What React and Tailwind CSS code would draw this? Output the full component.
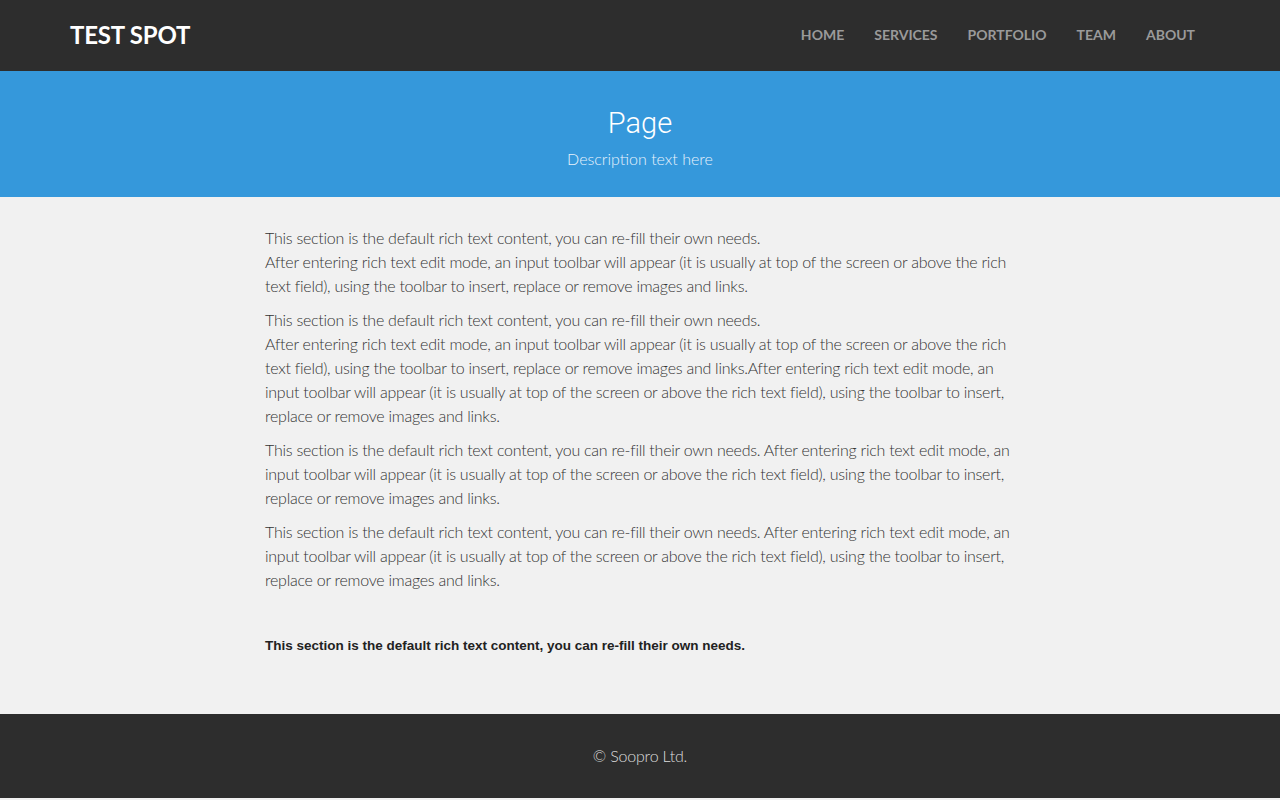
export default function App() {
  const p1 = "This section is the default rich text content, you can re-fill their own needs.";
  const p2 = "After entering rich text edit mode, an input toolbar will appear (it is usually at top of the screen or above the rich text field), using the toolbar to insert, replace or remove images and links.";
  return (
    <div className="bg-[#f1f1f1]" style={{ fontFamily: "Lato, 'Liberation Sans', sans-serif" }}>
      <header className="h-[71px] bg-[#2d2d2d] flex items-center justify-between pl-[70px] pr-[70px] pb-[2px]">
        <div className="text-white text-[24px] font-bold tracking-[-0.2px] leading-none">TEST SPOT</div>
        <nav className="flex items-center gap-[30px] text-[14px] font-bold text-[#9a9a9a] -mt-[1px]">
          <span>HOME</span>
          <span>SERVICES</span>
          <span>PORTFOLIO</span>
          <span>TEAM</span>
          <span className="mr-[15px]">ABOUT</span>
        </nav>
      </header>
      <section className="h-[126px] bg-[#3598db] flex flex-col items-center pt-[34px]">
        <h1 className="text-white text-[29px] leading-[36px]" style={{ fontFamily: "Roboto, 'Open Sans', sans-serif", fontWeight: 300 }}>Page</h1>
        <p className="text-[#e8f2fb] text-[16px] font-light leading-[22px] mt-[7px]">Description text here</p>
      </section>
      <main className="w-[750px] mx-auto pt-[29px] pb-[58px] text-[16px] leading-[24px] font-light tracking-[-0.25px] text-[#333333]">
        <p className="mb-[10px]">{p1}<br />{p2}</p>
        <p className="mb-[10px]">{p1}<br />{p2}{p2}</p>
        <p className="mb-[10px]">{p1} {p2}</p>
        <p className="mb-[10px]">{p1} {p2}</p>
        <p className="mt-[44px] text-[13.5px] leading-[20px] font-bold tracking-normal text-[#222222]" style={{ fontFamily: "'Liberation Sans', Arial, sans-serif" }}>{p1}</p>
      </main>
      <footer className="h-[84px] bg-[#2d2d2d] flex items-center justify-center">
        <span className="text-[#dddddd] text-[16px] font-light tracking-[-0.2px] -mt-[1px]">© Soopro Ltd.</span>
      </footer>
      <div className="h-[2px]"></div>
    </div>
  );
}
